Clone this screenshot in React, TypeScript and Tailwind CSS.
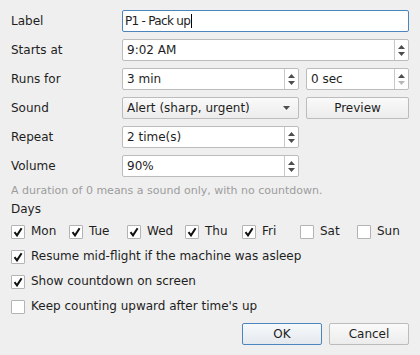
import React from 'react';

const font = { fontFamily: '"DejaVu Sans", sans-serif' };

const SpinArrows = ({ downDisabled = false }: { downDisabled?: boolean }) => (
  <div className="flex w-[14px] flex-col items-center justify-center gap-[3px] border-l border-[#c8c8c8]">
    <svg width="7" height="4" viewBox="0 0 7 4">
      <path d="M0 4 L3.5 0 L7 4 Z" fill="#4d4d4d" />
    </svg>
    <svg width="7" height="4" viewBox="0 0 7 4">
      <path d="M0 0 L3.5 4 L7 0 Z" fill={downDisabled ? '#b8b8b8' : '#4d4d4d'} />
    </svg>
  </div>
);

const SpinBox = ({ value, downDisabled, className = '' }: { value: string; downDisabled?: boolean; className?: string }) => (
  <div className={`flex h-[22px] rounded-[2px] border border-[#bcbcbc] bg-white ${className}`}>
    <div className="flex flex-1 items-center pl-[4px]">{value}</div>
    <SpinArrows downDisabled={downDisabled} />
  </div>
);

const Check = ({ checked }: { checked: boolean }) => (
  <div className="flex h-[14px] w-[14px] shrink-0 items-center justify-center rounded-[1px] border border-[#b4b4b4] bg-white">
    {checked && (
      <svg width="10" height="10" viewBox="0 0 10 10">
        <path d="M1.5 5.2 L4 8.4 L8.6 1.2" fill="none" stroke="#111" strokeWidth="2" />
      </svg>
    )}
  </div>
);

const CheckItem = ({ label, checked }: { label: string; checked: boolean }) => (
  <div className="flex h-[15px] items-center gap-[6px]">
    <Check checked={checked} />
    <span>{label}</span>
  </div>
);

const Button = ({ children, primary = false, className = '' }: { children: React.ReactNode; primary?: boolean; className?: string }) => (
  <div
    className={`flex h-[22px] items-center rounded-[2px] border ${
      primary
        ? 'border-[#4a86bd] bg-gradient-to-b from-[#f7f9fb] to-[#e4e9ee]'
        : 'border-[#bcbcbc] bg-gradient-to-b from-[#fafafa] to-[#ececec]'
    } ${className}`}
  >
    {children}
  </div>
);

export default function App() {
  const days = [
    { d: 'Mon', c: true },
    { d: 'Tue', c: true },
    { d: 'Wed', c: true },
    { d: 'Thu', c: true },
    { d: 'Fri', c: true },
    { d: 'Sat', c: false },
    { d: 'Sun', c: false },
  ];

  return (
    <div className="h-[355px] w-[420px] bg-[#efefef] px-[11px] pt-[10px] text-[12px] leading-[15px] text-[#1e1e1e]" style={font}>
      <div className="grid grid-cols-[111px_1fr] gap-y-[7px]">
        <div className="flex h-[22px] items-center">Label</div>
        <div className="flex h-[22px] items-center rounded-[2px] border border-[#4a86bd] bg-white pl-[2px]">
          <span className="tracking-[-0.7px]">P1 - Pack up</span>
          <span className="ml-[1px] h-[14px] w-px bg-black" />
        </div>

        <div className="flex h-[22px] items-center">Starts at</div>
        <SpinBox value="9:02 AM" />

        <div className="flex h-[22px] items-center">Runs for</div>
        <div className="flex gap-[7px]">
          <SpinBox value="3 min" className="flex-1" />
          <SpinBox value="0 sec" downDisabled className="w-[103px]" />
        </div>

        <div className="flex h-[22px] items-center">Sound</div>
        <div className="flex gap-[7px]">
          <Button className="flex-1 justify-between pl-[4px] pr-[8px]">
            <span>Alert (sharp, urgent)</span>
            <svg width="7" height="4" viewBox="0 0 7 4">
              <path d="M0 0 L3.5 4 L7 0 Z" fill="#4d4d4d" />
            </svg>
          </Button>
          <Button className="w-[103px] justify-center">Preview</Button>
        </div>

        <div className="flex h-[22px] items-center">Repeat</div>
        <div className="flex">
          <SpinBox value="2 time(s)" className="w-[177px]" />
        </div>

        <div className="flex h-[22px] items-center">Volume</div>
        <div className="flex">
          <SpinBox value="90%" className="w-[177px]" />
        </div>
      </div>

      <div className="mt-[6px] text-[11px] text-[#9c9c9c]">A duration of 0 means a sound only, with no countdown.</div>

      <div className="mt-[4px]">Days</div>

      <div className="mt-[7px] grid grid-cols-[58px_58px_58px_57px_58px_57px_1fr]">
        {days.map((x) => (
          <CheckItem key={x.d} label={x.d} checked={x.c} />
        ))}
      </div>

      <div className="mt-[10px] flex flex-col gap-[10px]">
        <CheckItem label="Resume mid-flight if the machine was asleep" checked />
        <CheckItem label="Show countdown on screen" checked />
        <CheckItem label="Keep counting upward after time's up" checked={false} />
      </div>

      <div className="mt-[9px] flex justify-end gap-[7px]">
        <Button primary className="w-[80px] justify-center">OK</Button>
        <Button className="w-[80px] justify-center">Cancel</Button>
      </div>
    </div>
  );
}
